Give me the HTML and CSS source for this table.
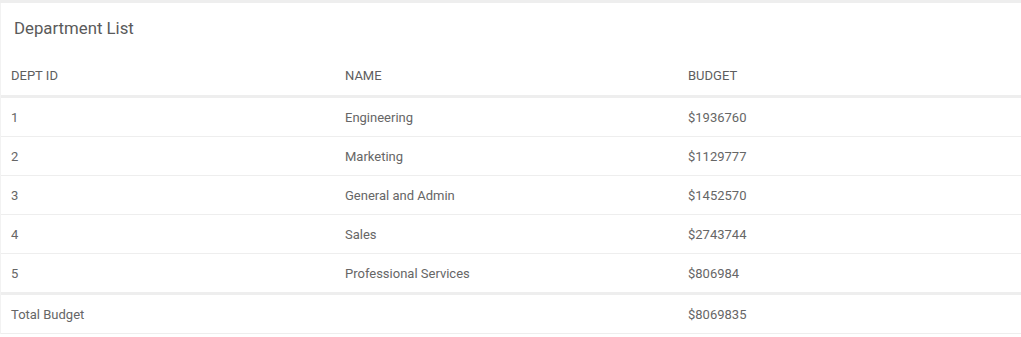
FILE: index.html
```html
<!DOCTYPE html>
<html>
<head>
<meta charset="utf-8">
<link rel="stylesheet" href="styles.css">
</head>
<body>
<div class="card">
  <div class="title">Department List</div>
  <table class="grid">
    <colgroup>
      <col class="c1"><col class="c2"><col class="c3">
    </colgroup>
    <thead>
      <tr><th>DEPT ID</th><th>NAME</th><th>BUDGET</th></tr>
    </thead>
    <tbody>
      <tr><td>1</td><td>Engineering</td><td>$1936760</td></tr>
      <tr><td>2</td><td>Marketing</td><td>$1129777</td></tr>
      <tr><td>3</td><td>General and Admin</td><td>$1452570</td></tr>
      <tr><td>4</td><td>Sales</td><td>$2743744</td></tr>
      <tr><td>5</td><td>Professional Services</td><td>$806984</td></tr>
    </tbody>
    <tfoot>
      <tr><td>Total Budget</td><td></td><td>$8069835</td></tr>
    </tfoot>
  </table>
</div>
</body>
</html>
```
FILE: styles.css
```css
html, body {
  margin: 0;
  padding: 0;
  background: #fff;
}
body {
  font-family: Roboto, "Liberation Sans", sans-serif;
  color: #666666;
  border-top: 3px solid #eeeeee;
}
.card {
  border-left: 1px solid #f2f2f2;
  background: #fff;
}
.title {
  height: 53px;
  box-sizing: border-box;
  padding: 14px 0 0 13px;
  font-size: 16.8px;
  color: #5a5a5a;
  line-height: 22px;
}
.grid {
  width: 100%;
  border-collapse: collapse;
  table-layout: fixed;
  font-size: 13px;
}
.c1 { width: 334px; }
.c2 { width: 343px; }
.grid th, .grid td {
  text-align: left;
  font-weight: 400;
  padding: 0 10px;
  line-height: 15px;
  white-space: nowrap;
}
.grid th {
  height: 39px;
  color: #5e5e5e;
  border-bottom: 3px solid #eeeeee;
}
.grid td {
  height: 38px;
  border-bottom: 1px solid #eeeeee;
}
.grid tbody tr:last-child td {
  border-bottom: 3px solid #eeeeee;
}
.grid tfoot td {
  height: 37px;
  padding-top: 1px;
}
```
